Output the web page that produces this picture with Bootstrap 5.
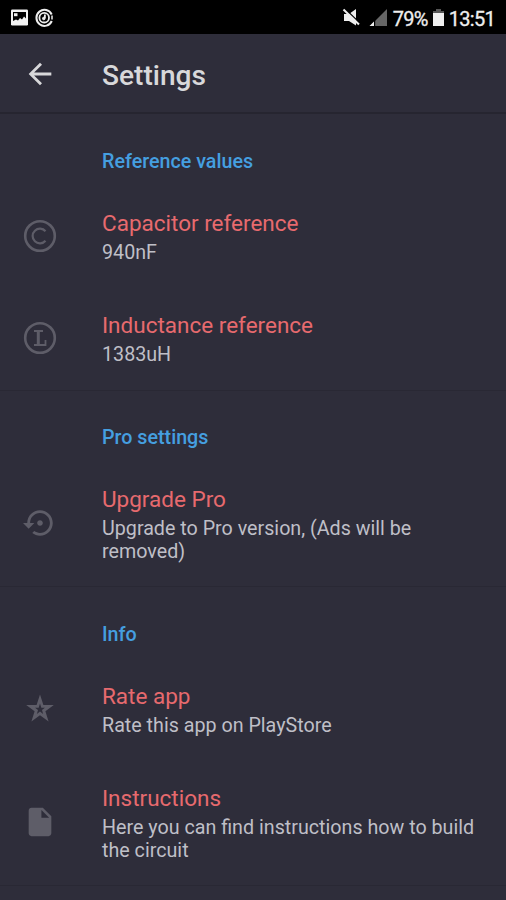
<!DOCTYPE html>
<html lang="en">
<head>
<meta charset="utf-8">
<meta name="viewport" content="width=device-width, initial-scale=1">
<title>Settings</title>
<link href="https://cdn.jsdelivr.net/npm/bootstrap@5.3.0/dist/css/bootstrap.min.css" rel="stylesheet">
<style>
body{background:#2e2d3a;font-family:Roboto,sans-serif;color:#c5c5cb;height:900px;overflow:hidden}
.status-bar{height:34px;background:#000;color:#eee;padding:1px 11px 0 9px;font-size:20px;line-height:34px}
.status-bar svg,.app-bar svg,.pref svg{display:block;flex:none}
.status-bar span{padding-top:3px}
.clock{letter-spacing:-.7px;margin-left:3px;-webkit-text-stroke:.3px #eee}
.pct{letter-spacing:-.7px;-webkit-text-stroke:.3px #eee}
.app-bar{height:80px;border-bottom:2px solid #262530;color:#d8d8da;padding:1px 0 0 23px}
.app-bar h1{font-size:28.1px;font-weight:500;margin:3px 0 0 45px;line-height:33px}
.group:nth-child(2){margin-top:-1px}
.group{border-bottom:1px solid #292834}
.group-title{color:#459fe0;font-size:19.7px;font-weight:500;line-height:23px;margin:0;padding:36px 0 13px 102px;height:72px}
.pref{padding:24px 16px 0 23px;min-height:102px}
.pref.tall{min-height:124px}
.pref .icon-cell{width:79px;color:#5e5d68;margin-top:-26px}
.pref h3{font-size:22.5px;font-weight:400;color:#e76a6e;line-height:26px;margin:0 0 4.6px}
.pref p{font-size:19.7px;line-height:23px;margin:0;color:#bfbfc7}
</style>
<script src="https://cdn.jsdelivr.net/npm/bootstrap@5.3.0/dist/js/bootstrap.bundle.min.js"></script>
</head>
<body>
<div class="status-bar d-flex align-items-center justify-content-between">
  <div class="d-flex align-items-center">
    <svg width="20" height="18" viewBox="0 0 20 18"><rect x="2" y="0.500" width="17" height="16" rx="1.200" fill="#f2f2f2"/><path d="M4 3h13v6.500l-2-2-2 3-2-1.500-2 2.500-2-1L4 12z" fill="#000"/><path d="M5 4.200h3.500v3H5z" fill="#eee"/></svg>
    <svg class="ms-1" width="22" height="20" viewBox="0 0 22 20" fill="none" stroke="#eee"><path d="M18.700 6.500A8 8 0 1 0 18.800 13" stroke-width="2"/><path d="M19 7.500v4" stroke-width="1.500"/><circle cx="11.200" cy="9.700" r="4.800" stroke-width="1.800"/><path d="M11.900 10V6.500" stroke-width="1.800"/><circle cx="10.800" cy="10.500" r="1.300" fill="#eee" stroke-width="1"/></svg>
  </div>
  <div class="d-flex align-items-center">
    <svg width="20" height="20" viewBox="0 0 20 20"><path d="M3 6h5l7-5v16.500l-7-4.500H3z" fill="#eee"/><path d="M4.500 1.200l14 13.500" stroke="#000" stroke-width="1.300"/><path d="M2.500 1.500l15.500 15" stroke="#eee" stroke-width="2"/></svg>
    <svg class="ms-2" width="20" height="20" viewBox="0 0 20 20"><path d="M18 1v17H1z" fill="#666"/><path d="M5 13.500V18H.5z" fill="#eee"/><path d="M5.600 12v7" stroke="#000" stroke-width="1.200"/></svg>
    <span class="pct ms-1">79%</span>
    <svg class="ms-1" width="14" height="20" viewBox="0 0 14 20"><path d="M4 1h5v2h3v4H1V3h3z" fill="#555"/><path d="M1 5h11v13H1z" fill="#eee"/></svg>
    <span class="clock">13:51</span>
  </div>
</div>
<header class="app-bar d-flex align-items-center">
  <svg width="34" height="34" viewBox="0 0 24 24" fill="currentColor"><path d="M20 11H7.830l5.590-5.590L12 4l-8 8 8 8 1.410-1.410L7.830 13H20z"/></svg>
  <h1>Settings</h1>
</header>
<main>
  <section class="group">
    <h2 class="group-title">Reference values</h2>
    <div class="pref d-flex">
      <div class="icon-cell d-flex align-items-center"><svg width="34" height="34" viewBox="0 0 34 34" fill="none" stroke="currentColor"><circle cx="17" cy="17" r="14.800" stroke-width="2.600"/><path d="M22.500 12.300A7.300 7.300 0 1 0 22.500 21.700" stroke-width="2.200"/></svg></div>
      <div><h3>Capacitor reference</h3><p>940nF</p></div>
    </div>
    <div class="pref d-flex">
      <div class="icon-cell d-flex align-items-center"><svg width="34" height="34" viewBox="0 0 34 34" fill="none" stroke="currentColor"><circle cx="17" cy="17" r="14.800" stroke-width="2.600"/><path d="M11 10h9M11 24h11.500v-5" stroke-width="1.800"/><path d="M15.300 10v14" stroke-width="3"/></svg></div>
      <div><h3>Inductance reference</h3><p>1383uH</p></div>
    </div>
  </section>
  <section class="group">
    <h2 class="group-title">Pro settings</h2>
    <div class="pref tall d-flex">
      <div class="icon-cell d-flex align-items-center"><svg width="34" height="34" viewBox="0 0 24 24" fill="currentColor"><path d="M14 12c0-1.100-.9-2-2-2s-2 .9-2 2 .9 2 2 2 2-.9 2-2zm-2-9c-4.970 0-9 4.030-9 9H0l4 4 4-4H5c0-3.870 3.130-7 7-7s7 3.130 7 7-3.130 7-7 7c-1.510 0-2.910-.49-4.060-1.300l-1.420 1.440C8.040 20.300 9.940 21 12 21c4.970 0 9-4.030 9-9s-4.030-9-9-9z"/></svg></div>
      <div><h3>Upgrade Pro</h3><p>Upgrade to Pro version, (Ads will be<br>removed)</p></div>
    </div>
  </section>
  <section class="group">
    <h2 class="group-title">Info</h2>
    <div class="pref d-flex">
      <div class="icon-cell d-flex align-items-center"><svg width="34" height="34" viewBox="0 0 34 34"><path fill="currentColor" fill-rule="evenodd" d="M17 2.500l3.400 10.500h10.400l-8.400 6.200 3.200 10.300-8.600-6.300-8.600 6.300 3.200-10.300L3.200 13h10.400zM17 11.500l-1.300 4.300h-3.600l2.900 2.300-1.100 3.900 3.100-2.400 3.100 2.400-1.100-3.900 2.900-2.300h-3.600z"/></svg></div>
      <div><h3>Rate app</h3><p>Rate this app on PlayStore</p></div>
    </div>
    <div class="pref tall d-flex">
      <div class="icon-cell d-flex align-items-center"><svg width="34" height="34" viewBox="0 0 24 24" fill="currentColor"><path d="M6 2c-1.100 0-1.990.9-1.990 2L4 20c0 1.100.89 2 1.990 2H18c1.100 0 2-.9 2-2V8l-6-6H6zm7 7V3.500L18.500 9H13z"/></svg></div>
      <div><h3>Instructions</h3><p>Here you can find instructions how to build<br>the circuit</p></div>
    </div>
  </section>
</main>
</body>
</html>
